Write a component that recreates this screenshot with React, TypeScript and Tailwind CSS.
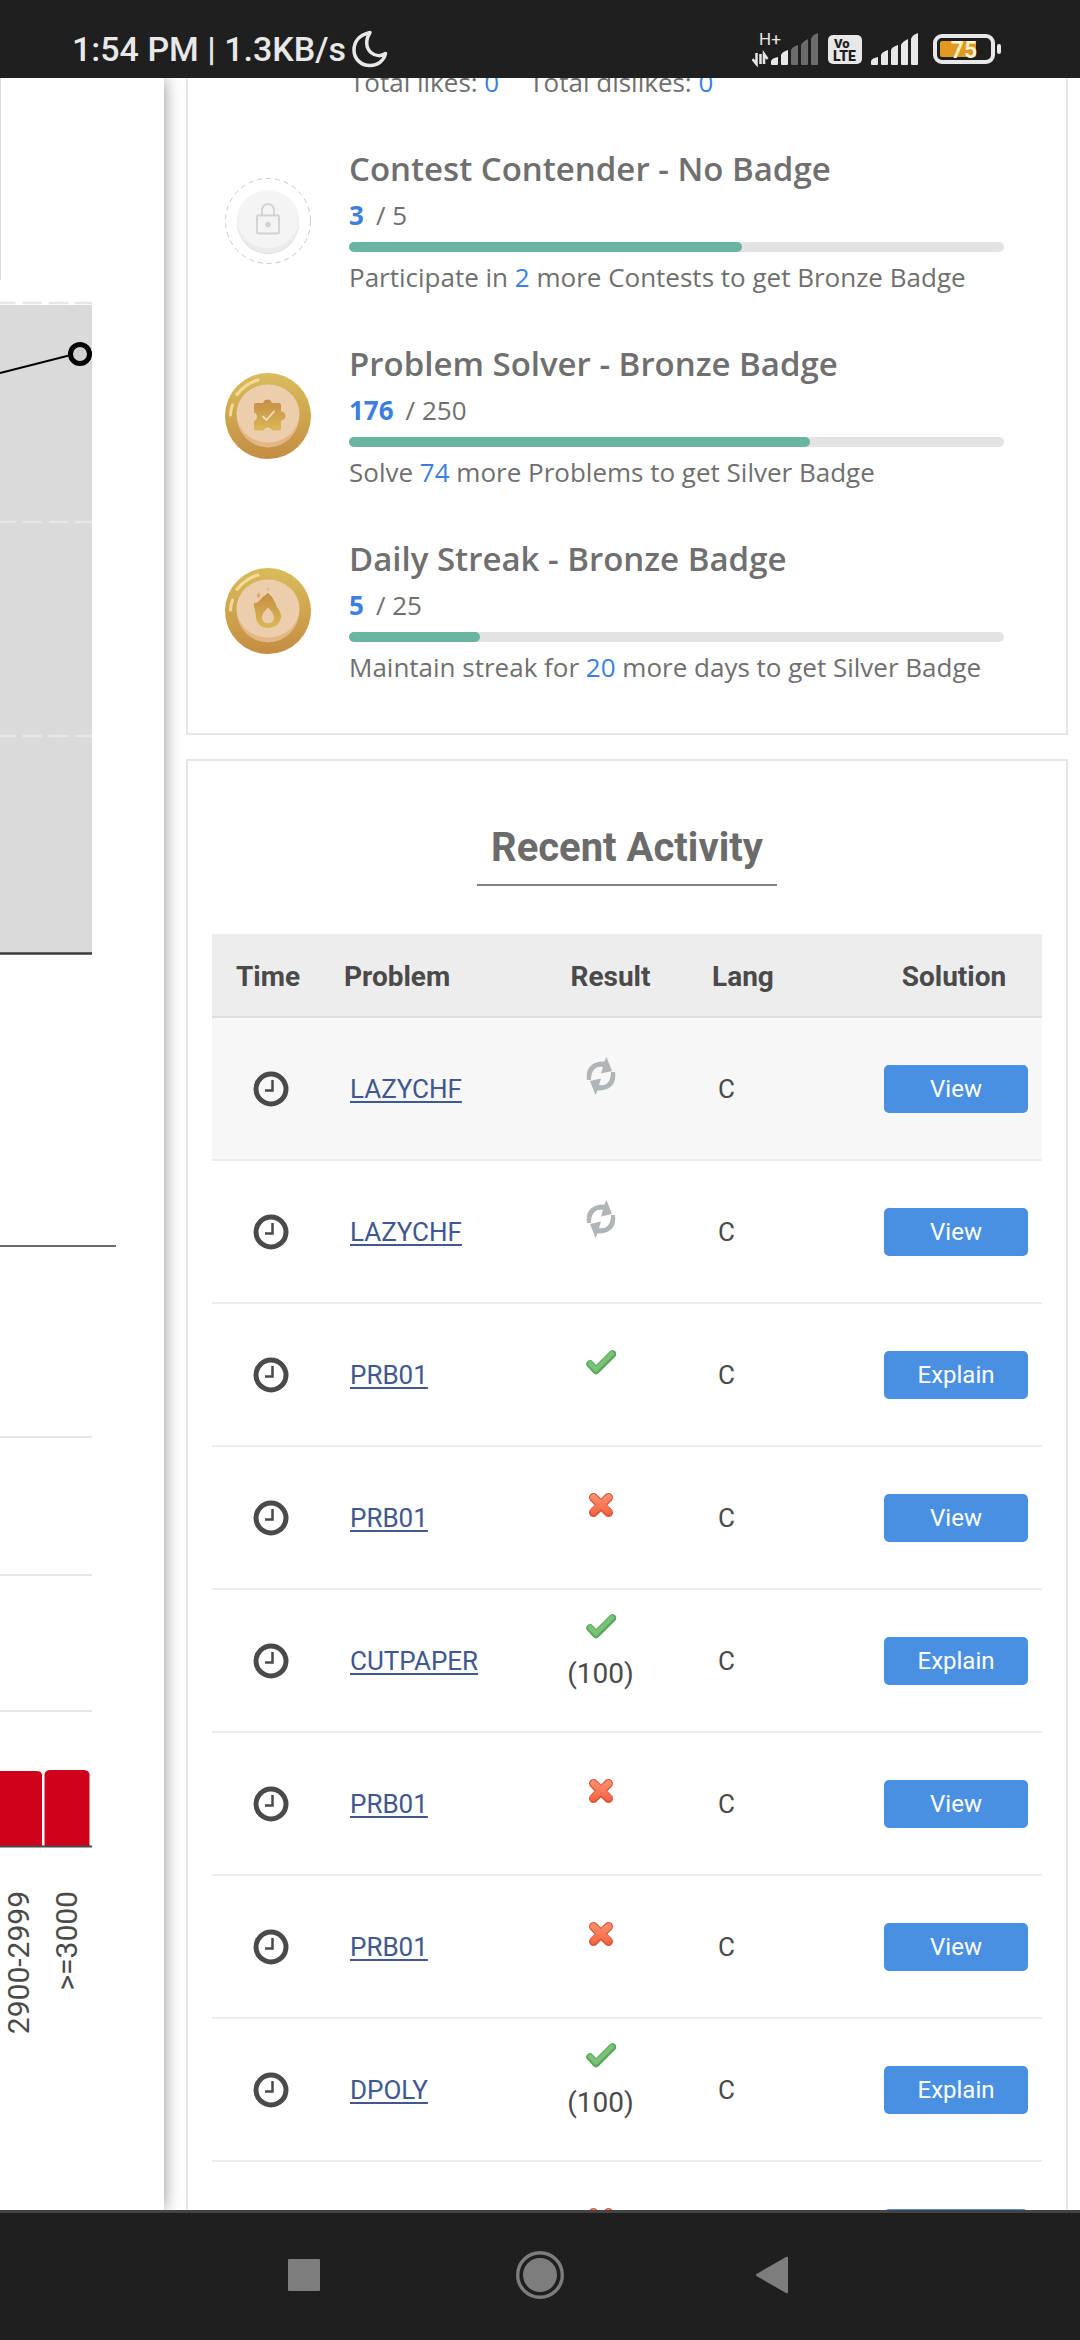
import { ReactNode } from "react";

type Result = 'pending' | 'accepted' | 'wrong';

const badges = [
  { title: 'Contest Contender - No Badge', icon: <LockBadge />, value: 3, total: 5, before: 'Participate in', left: 2, after: 'more Contests to get Bronze Badge' },
  { title: 'Problem Solver - Bronze Badge', icon: <PuzzleBadge />, value: 176, total: 250, before: 'Solve', left: 74, after: 'more Problems to get Silver Badge' },
  { title: 'Daily Streak - Bronze Badge', icon: <FlameBadge />, value: 5, total: 25, before: 'Maintain streak for', left: 20, after: 'more days to get Silver Badge' },
];

const activity: { problem: string, result: Result, score?: number, lang: string, action: string }[] = [
  { problem: 'LAZYCHF', result: 'pending', lang: 'C', action: 'View' },
  { problem: 'LAZYCHF', result: 'pending', lang: 'C', action: 'View' },
  { problem: 'PRB01', result: 'accepted', lang: 'C', action: 'Explain' },
  { problem: 'PRB01', result: 'wrong', lang: 'C', action: 'View' },
  { problem: 'CUTPAPER', result: 'accepted', score: 100, lang: 'C', action: 'Explain' },
  { problem: 'PRB01', result: 'wrong', lang: 'C', action: 'View' },
  { problem: 'PRB01', result: 'wrong', lang: 'C', action: 'View' },
  { problem: 'DPOLY', result: 'accepted', score: 100, lang: 'C', action: 'Explain' },
  { problem: 'PRB01', result: 'wrong', lang: 'C', action: 'View' },
];

function LockBadge() {
  return (
    <svg width="86" height="86" viewBox="0 0 86 86" aria-hidden="true">
      <circle cx="43" cy="43" r="42.5" fill="none" stroke="#c9c9c9" strokeDasharray="5 4" />
      <circle cx="43" cy="45" r="31" fill="#dedede" />
      <circle cx="43" cy="44" r="31" fill="#ebebeb" />
      <ellipse cx="43" cy="41" rx="31" ry="29" fill="#f4f4f4" />
      <rect x="32" y="37.5" width="22" height="18" rx="1.5" fill="none" stroke="#d2d2d2" strokeWidth="1.8" />
      <path d="M37 37v-5a6 6 0 0 1 12 0v5" fill="none" stroke="#d2d2d2" strokeWidth="1.8" />
      <circle cx="43" cy="46.5" r="2.8" fill="#d2d2d2" />
    </svg>
  )
}

function Coin({ children }: { children: ReactNode }) {
  return (
    <svg width="86" height="86" viewBox="0 0 86 86" aria-hidden="true">
      <defs>
        <linearGradient id="coin" x1="0" y1="0" x2="0" y2="1">
          <stop offset="0" stopColor="#d9bc5c" />
          <stop offset="0.5" stopColor="#cfa64e" />
          <stop offset="1" stopColor="#c48c42" />
        </linearGradient>
        <linearGradient id="mark" x1="0" y1="0" x2="0" y2="1">
          <stop offset="0" stopColor="#c58d45" />
          <stop offset="1" stopColor="#dbb956" />
        </linearGradient>
      </defs>
      <circle cx="43" cy="43" r="43" fill="url(#coin)" />
      <circle cx="43" cy="44" r="31.5" fill="#c4914a" />
      <circle cx="43" cy="43" r="31.5" fill="#e3b684" />
      <ellipse cx="43" cy="40.5" rx="31.5" ry="29" fill="#edceac" />
      <path d="M12 21.5Q21 10 33 7" fill="none" stroke="#f3dc9a" strokeWidth="3" strokeLinecap="round" />
      <path d="M5.5 42Q5.5 37 7.5 32" fill="none" stroke="#f3dc9a" strokeWidth="3" strokeLinecap="round" />
      {children}
    </svg>
  )
}

function PuzzleBadge() {
  return (
    <Coin>
      <path d="M31 30h6.5a1 1 0 0 0 1-1a4.5 4.5 0 0 1 8 0a1 1 0 0 0 1 1H54q2 0 2 2v6.5a4.5 4.5 0 0 1 0 9V55.5q0 2-2 2h-7a4.5 4.5 0 0 0-8.5 0H31q-2 0-2-2V48a4.5 4.5 0 0 0 0-8.5V32q0-2 2-2z" fill="url(#mark)" />
      <path d="M38 43.5l3.5 3.5 7.5-8.5" fill="none" stroke="#f2dcc0" strokeWidth="1.8" strokeLinecap="round" strokeLinejoin="round" />
    </Coin>
  )
}

function FlameBadge() {
  return (
    <Coin>
      <path d="M43 25q4 3 6 8q2 2 2.5 5q5 7 4.5 11c-1 7-6 11-13 11s-12-5-12-11c0-6-3-10-2-14q3 0 4-1q5-6 10-9z" fill="url(#mark)" />
      <path d="M43 39.5q6 6 6 10a6 6 0 0 1-12 0q0-4 6-10z" fill="#edceac" />
      <path d="M33.5 24.5l2 3-2 3-2-3zM43 19.5l1 1.5-1 1.5-1-1.5z" fill="#d9a970" />
    </Coin>
  )
}

function ClockIcon() {
  return (
    <svg className="inline-block" width="36" height="36" viewBox="0 0 36 36" role="img" aria-label="Submission time">
      <circle cx="18" cy="18" r="15" fill="none" stroke="#4a4a4a" strokeWidth="5" />
      <path d="M12 19.5h7.5V9" fill="none" stroke="#4a4a4a" strokeWidth="2.5" />
    </svg>
  )
}

function ResultIcon({ result }: { result: Result }) {
  if (result === 'pending') {
    return (
      <svg width="30" height="40" viewBox="0 0 30 40" role="img" aria-label="Pending">
        <g fill="#b0b5b7">
          <path d="M1 24C-1 11 7 5 18.5 5.5L20.5 1L26 15L15 17.5L17 11C10 9.5 5 14 5 24z" />
          <path transform="rotate(180 15 20)" d="M1 24C-1 11 7 5 18.5 5.5L20.5 1L26 15L15 17.5L17 11C10 9.5 5 14 5 24z" />
        </g>
      </svg>
    )
  }
  if (result === 'accepted') {
    return (
      <svg width="30" height="40" viewBox="0 0 30 40" role="img" aria-label="Accepted">
        <path d="M4 22l6 6.5L26.5 12" fill="none" stroke="#5da75c" strokeWidth="7.5" strokeLinejoin="round" strokeLinecap="round" />
        <path d="M4 21.5l6 6L26 11.5" fill="none" stroke="#78c377" strokeWidth="4.5" strokeLinejoin="round" strokeLinecap="round" />
      </svg>
    )
  }
  return (
    <svg width="30" height="40" viewBox="0 0 30 40" role="img" aria-label="Wrong answer">
      <defs>
        <linearGradient id="cross" gradientUnits="userSpaceOnUse" x1="0" y1="8" x2="0" y2="32">
          <stop offset="0" stopColor="#fd9474" />
          <stop offset="1" stopColor="#f4603c" />
        </linearGradient>
      </defs>
      <path d="M7.5 12.5l15 15M22.5 12.5l-15 15" fill="none" stroke="#d9583a" strokeWidth="9" strokeLinecap="round" />
      <path d="M7.5 12.5l15 14M22.5 12.5l-15 14" fill="none" stroke="url(#cross)" strokeWidth="6.5" strokeLinecap="round" />
    </svg>
  )
}

function Signal({ x, active }: { x: number, active: number }) {
  const bars = ['M0 31v-3q1-3 7-4v7q0 1-1 1H1q-1 0-1-1z', 'M10 31V22q1-3 7-5v14q0 1-1 1h-5q-1 0-1-1z', 'M20 31V17q1-3 7-5v19q0 1-1 1h-5q-1 0-1-1z', 'M30 31V12q1-3 7-6v25q0 1-1 1h-5q-1 0-1-1z', 'M40 31V6q1-4 7-6v31q0 1-1 1h-5q-1 0-1-1z'];
  return (
    <g transform={`translate(${x} 3)`}>
      {bars.map((d, i) => <path key={d} d={d} fill={i < active ? '#e8e8e8' : '#6c6c6c'} />)}
    </g>
  )
}

function StatusBar() {
  return (
    <header className="h-[78px] shrink-0 bg-[#1f1f1f] text-[#e8e8e8] flex items-center justify-between pl-[72px] pr-[78px] pt-5 relative z-20">
      <div className="flex items-center gap-1.5">
        <span className="text-[34px] leading-10 font-medium whitespace-nowrap">1:54 PM | 1.3KB/s</span>
        <svg width="36" height="38" viewBox="0 0 36 38" role="img" aria-label="Do not disturb">
          <path d="M18 2.5C7 5 2 12 2 20c0 9 7 15.5 16 15.5c8 0 14-5 15.5-12c-4 3-10 3-14.5-1c-5-4.500-6-12-1-20z" fill="none" stroke="#e8e8e8" strokeWidth="3.5" strokeLinejoin="round" />
        </svg>
      </div>
      <svg width="250" height="38" viewBox="0 0 250 38" role="img" aria-label="Mobile signal and battery">
        <text x="7" y="15" fontSize="17" fill="#e8e8e8">H+</text>
        <path d="M4.5 23v10M0.5 29l4 5V27M8.5 34V24M12 34V24l3.5 5" stroke="#e8e8e8" strokeWidth="2.5" fill="none" />
        <Signal x={19} active={2} />
        <rect x="76" y="5" width="34" height="29" rx="5" fill="#e8e8e8" />
        <text x="82" y="18" fontSize="13" fontWeight="900" fill="#1f1f1f">Vo</text>
        <text x="81" y="31" fontSize="14" fontWeight="900" fill="#1f1f1f">LTE</text>
        <Signal x={119} active={5} />
        <rect x="183" y="6" width="58" height="26" rx="7" fill="none" stroke="#e8e8e8" strokeWidth="4" />
        <rect x="188" y="11" width="36" height="16" rx="2" fill="#e09a20" />
        <rect x="245" y="14" width="4" height="10" rx="2" fill="#e8e8e8" />
        <text x="212" y="28" textAnchor="middle" fontSize="23" fontWeight="600" fill="#fff3d6">75</text>
      </svg>
    </header>
  )
}

function RatingPanel() {
  return (
    <aside className="w-41 shrink-0 bg-white relative z-10 shadow-[0_0_16px_rgba(0,0,0,0.44)]">
      <div className="h-[202px] w-px bg-[#dcdcdc]"></div>
      <svg className="mt-5" width="116" height="656" viewBox="0 0 116 656" role="img" aria-label="Contest rating">
        <rect x="0" y="5" width="92" height="649" fill="#dadada" />
        <path d="M-4 3H92M-4 222H92M-4 436H92" stroke="#e7e7e7" strokeWidth="2.5" strokeDasharray="19.6 6.8" />
        <path d="M0 73L69 55.5" stroke="#000" strokeWidth="2" />
        <circle cx="80" cy="54" r="9.5" fill="#d0d0d0" stroke="#000" strokeWidth="5" />
        <path d="M0 653.5H92" stroke="#3c3c3c" strokeWidth="2.5" />
      </svg>
      <div className="mt-[289px] w-29 border-t-2 border-[#6b6b6b]"></div>
      <svg className="mt-[182px]" width="116" height="620" viewBox="0 0 116 620" role="img" aria-label="Rating distribution">
        <path d="M0 8H92M0 146H92M0 282H92" stroke="#e7e7e7" strokeWidth="2" />
        <path d="M0 342h36q6 0 6 4v71H0zM44.5 417v-72q1-4 6-4h33q5 0 6 4v72z" fill="#d0021b" />
        <path d="M0 417.5H92" stroke="#4a4a4a" strokeWidth="2" />
        <text transform="rotate(-90 29 462)" x="29" y="462" textAnchor="end" fontSize="30" fill="#4a4a4a">2900-2999</text>
        <text transform="rotate(-90 77 462)" x="77" y="462" textAnchor="end" fontSize="30" fill="#4a4a4a">&gt;=3000</text>
      </svg>
    </aside>
  )
}

function BadgeCard() {
  return (
    <section className="border-2 border-t-0 border-[#e6e6e6] pl-[37px] pr-[62px] pb-12 font-['Open_Sans',sans-serif] text-[26px] leading-9 text-[#6f6f6f]">
      <p className="-mt-[14px] ml-[125px] flex gap-[30px]">
        <span>Total likes: <span className="text-[#3d7fdf]">0</span></span>
        <span>Total dislikes: <span className="text-[#3d7fdf]">0</span></span>
      </p>
      {badges.map((badge) => (
        <div key={badge.title} className="mt-[47px] flex items-center gap-[38px]">
          <div className="w-[86px] shrink-0">{badge.icon}</div>
          <div className="flex-1">
            <h3 className="text-[33px] leading-[44px] font-semibold">{badge.title}</h3>
            <p className="mt-1.5">
              <span className="font-bold text-[#3d7fdf] mr-3">{badge.value}</span>/ {badge.total}
            </p>
            <div className="mt-[9px] h-[10px] rounded-full bg-[#e3e3e3]">
              <div className="h-full rounded-full bg-[#6ab5a1]" style={{ width: `${badge.value / badge.total * 100}%` }}></div>
            </div>
            <p className="mt-[7px]">{badge.before} <span className="text-[#3d7fdf]">{badge.left}</span> {badge.after}</p>
          </div>
        </div>
      ))}
    </section>
  )
}

function ActivityCard() {
  return (
    <section className="mt-6 border-2 border-[#e6e6e6] px-6 pt-[61px] text-[#4a4a4a]">
      <h2 className="mx-auto w-fit border-b-2 border-[#808080] px-[14px] pb-[10px] text-[40px] leading-[52px] font-bold text-[#6b6b6b]">Recent Activity</h2>
      <table className="mt-12 w-full table-fixed border-separate border-spacing-0 text-[26px] leading-8">
        <colgroup>
          <col className="w-[118px]" />
          <col />
          <col className="w-[175px]" />
          <col className="w-[172px]" />
          <col className="w-[172px]" />
        </colgroup>
        <thead className="bg-[#ededed] text-[28px]">
          <tr>
            <th className="h-[84px] border-b-2 border-[#dedede] pt-1 pr-1.5">Time</th>
            <th className="border-b-2 border-[#dedede] pt-1 pl-[14px] text-left">Problem</th>
            <th className="border-b-2 border-[#dedede] pt-1">Result</th>
            <th className="border-b-2 border-[#dedede] pt-1 pl-[14px] text-left">Lang</th>
            <th className="border-b-2 border-[#dedede] pt-1 pr-1">Solution</th>
          </tr>
        </thead>
        <tbody>
          {activity.map((row, i) => (
            <tr key={i} className="first:bg-[#f7f7f7]">
              <td className="h-[143px] border-b-2 border-[#ececec] text-center"><ClockIcon /></td>
              <td className="border-b-2 border-[#ececec] pl-5"><a href="#" className="text-[#40578f] underline underline-offset-3 decoration-2">{row.problem}</a></td>
              <td className="border-b-2 border-[#ececec] pr-5 pb-[26px]">
                <div className="flex flex-col items-center">
                  <ResultIcon result={row.result} />
                  {row.score && <span className="mt-3 text-[28px] leading-8">({row.score})</span>}
                </div>
              </td>
              <td className="border-b-2 border-[#ececec] pl-5">{row.lang}</td>
              <td className="border-b-2 border-[#ececec] px-[14px]">
                <button className="block w-full h-12 rounded-[5px] bg-[#4a90e2] text-white text-[24px]">{row.action}</button>
              </td>
            </tr>
          ))}
        </tbody>
      </table>
    </section>
  )
}

function NavigationBar() {
  return (
    <nav className="h-[130px] shrink-0 bg-[#1f1f1f] border-t-3 border-[#444444] pb-1 flex items-center justify-center gap-[188px] relative z-20">
      <button aria-label="Recent apps">
        <svg width="48" height="48" viewBox="0 0 48 48"><rect x="8" y="8" width="32" height="32" rx="1" fill="#7d7d7d" /></svg>
      </button>
      <button aria-label="Home">
        <svg width="48" height="48" viewBox="0 0 48 48">
          <circle cx="24" cy="24" r="22.3" fill="none" stroke="#7d7d7d" strokeWidth="3.4" />
          <circle cx="24" cy="24" r="17" fill="#7d7d7d" />
        </svg>
      </button>
      <button aria-label="Back">
        <svg width="48" height="48" viewBox="0 0 48 48"><path d="M4.5 23L34 6q2-1 2 1v34q0 2-2 1L4.5 25q-1-1 0-2z" fill="#7d7d7d" /></svg>
      </button>
    </nav>
  )
}

export default function App() {
  return (
    <div className="h-screen w-full flex flex-col overflow-hidden bg-white font-[Roboto,sans-serif]">
      <StatusBar />
      <main className="flex-1 min-h-0 flex overflow-hidden">
        <RatingPanel />
        <div className="flex-1 min-w-0 ml-[22px] mr-3">
          <BadgeCard />
          <ActivityCard />
        </div>
      </main>
      <NavigationBar />
    </div>
  )
}
